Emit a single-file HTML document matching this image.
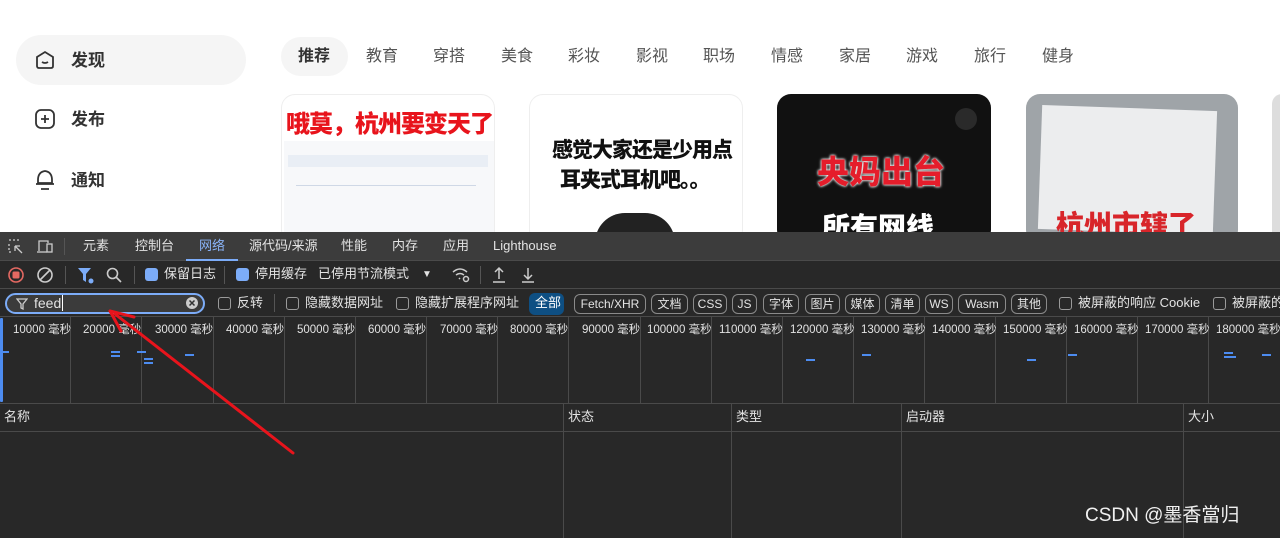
<!DOCTYPE html>
<html><head><meta charset="utf-8"><style>
*{margin:0;padding:0;box-sizing:border-box}
body{width:1280px;height:538px;overflow:hidden;position:relative;background:#fff;font-family:"Liberation Sans","Noto Sans CJK SC",sans-serif;line-height:1.15}
.a{position:absolute;white-space:nowrap}
.nav{font-size:17px;color:#333;font-weight:600}
.tab{font-size:16px;color:#555;top:48px}
.card{position:absolute;top:94px;height:150px;border-radius:14px;overflow:hidden;border:1px solid #eee}
.dt{position:absolute;left:0;top:232px;width:1280px;height:306px;background:#282828;color:#e3e3e3;font-size:13px}
.dt .a{color:#e3e3e3}
.tl{font-size:11.5px;top:92px;color:#ddd}
.vl{position:absolute;top:85px;height:86px;width:1px;background:#4a4a4a}
.chip{position:absolute;top:62px;height:20px;border:1px solid #8a8a8a;border-radius:6px;font-size:12px;line-height:18px;text-align:center;color:#e3e3e3}
.cb{position:absolute;width:13px;height:13px;border-radius:3px}
.cbon{background:#7cacf8}
.cboff{border:1px solid #9a9a9a}
.bl{position:absolute;height:2px;background:#4d8cf0}
</style></head><body>
<!-- left nav -->
<div class="a" style="left:16px;top:35px;width:230px;height:50px;border-radius:25px;background:#f5f5f5"></div>
<svg class="a" style="left:34px;top:49px" width="22" height="22" viewBox="0 0 22 22" fill="none" stroke="#333" stroke-width="1.8"><path d="M3 8 L11 3 L19 8 V17 Q19 19 17 19 H5 Q3 19 3 17Z"/><path d="M8 13 Q11 15 14 13"/></svg>
<div class="a nav" style="left:71px;top:51px">发现</div>
<svg class="a" style="left:34px;top:108px" width="22" height="22" viewBox="0 0 22 22" fill="none" stroke="#333" stroke-width="1.8"><rect x="2" y="2" width="18" height="18" rx="5"/><path d="M11 7 V15 M7 11 H15"/></svg>
<div class="a nav" style="left:71px;top:110px">发布</div>
<svg class="a" style="left:34px;top:168px" width="22" height="24" viewBox="0 0 22 24" fill="none" stroke="#333" stroke-width="1.8"><path d="M11 3 Q4 4 4 12 V15 H18 V12 Q18 4 11 3Z"/><path d="M2 16 H20 M7 21 H15"/></svg>
<div class="a nav" style="left:71px;top:171px">通知</div>
<!-- tabs -->
<div class="a" style="left:281px;top:37px;width:67px;height:39px;border-radius:20px;background:#f5f5f5"></div>
<div class="a tab" style="left:298px;color:#333;font-weight:700">推荐</div>
<div class="a tab" style="left:366px">教育</div><div class="a tab" style="left:433px">穿搭</div><div class="a tab" style="left:501px">美食</div><div class="a tab" style="left:568px">彩妆</div><div class="a tab" style="left:636px">影视</div><div class="a tab" style="left:703px">职场</div><div class="a tab" style="left:771px">情感</div><div class="a tab" style="left:839px">家居</div><div class="a tab" style="left:906px">游戏</div><div class="a tab" style="left:974px">旅行</div><div class="a tab" style="left:1042px">健身</div>
<!-- cards -->
<div class="card" style="left:281px;width:214px;background:#fff">
 <div class="a" style="left:4px;top:16px;font-size:24px;font-weight:900;color:#e8141c;letter-spacing:-1px">哦莫，杭州要变天了</div>
 <div class="a" style="left:2px;top:46px;width:210px;height:100px;background:#f7f8fa"></div>
 <div class="a" style="left:6px;top:60px;width:200px;height:12px;background:#e9eef5"></div>
 <div class="a" style="left:14px;top:90px;width:180px;height:1px;background:#cfd8e6"></div>
</div>
<div class="card" style="left:529px;width:214px;background:#fff">
 <div class="a" style="left:22px;top:44px;font-size:21px;font-weight:800;color:#111;letter-spacing:-1px">感觉大家还是少用点</div>
 <div class="a" style="left:30px;top:74px;font-size:21px;font-weight:800;color:#111;letter-spacing:-1px">耳夹式耳机吧。。</div>
 <div class="a" style="left:65px;top:118px;width:80px;height:60px;border-radius:40px;background:#222"></div>
</div>
<div class="card" style="left:777px;width:214px;background:#111;border:none">
 <div class="a" style="left:40px;top:60px;font-size:32px;font-weight:900;color:#e51d2b;text-shadow:0 0 3px #fff,0 0 2px #fff">央妈出台</div>
 <div class="a" style="left:45px;top:118px;font-size:28px;font-weight:900;color:#fff">所有网线</div>
 <div class="a" style="left:178px;top:14px;width:22px;height:22px;border-radius:11px;background:#2a2a2a"></div>
</div>
<div class="card" style="left:1026px;width:212px;background:#9fa4a8;border:none">
 <div class="a" style="left:14px;top:14px;width:175px;height:124px;background:#ecedee;transform:rotate(2deg)"></div>
 <div class="a" style="left:30px;top:116px;font-size:28px;font-weight:900;color:#d8252a">杭州市辖了</div>
</div>
<div class="card" style="left:1272px;width:20px;background:#ddd;border:none"></div>
<!-- devtools -->
<div class="dt">
 <div class="a" style="left:0;top:0;width:1280px;height:29px;background:#3c3c3c;border-bottom:1px solid #4a4a4a"></div>
 <svg class="a" style="left:8px;top:7px" width="16" height="16" viewBox="0 0 16 16" fill="none" stroke="#ccc" stroke-width="1.3"><path d="M1 1h2M5 1h2M9 1h2M1 5v2M1 9v2M1 13h2" /><path d="M7 7l7 7M7 7v5M7 7h5"/></svg>
 <svg class="a" style="left:36px;top:7px" width="18" height="16" viewBox="0 0 18 16" fill="none" stroke="#ccc" stroke-width="1.3"><path d="M3 12V2h9v2"/><path d="M1 13h10"/><rect x="11" y="5" width="5" height="8"/></svg>
 <div class="a" style="left:64px;top:6px;width:1px;height:17px;background:#555"></div>
 <div class="a" style="left:83px;top:7px">元素</div><div class="a" style="left:135px;top:7px">控制台</div>
 <div class="a" style="left:199px;top:7px;color:#8ab4f8!important">网络</div>
 <div class="a" style="left:186px;top:27px;width:52px;height:2px;background:#7cacf8"></div>
 <div class="a" style="left:249px;top:7px">源代码/来源</div><div class="a" style="left:341px;top:7px">性能</div><div class="a" style="left:392px;top:7px">内存</div><div class="a" style="left:443px;top:7px">应用</div><div class="a" style="left:493px;top:7px">Lighthouse</div>
 <!-- toolbar -->
 <div class="a" style="left:0;top:56px;width:1280px;height:1px;background:#4a4a4a"></div>
 <svg class="a" style="left:7px;top:34px" width="18" height="18"><circle cx="9" cy="9" r="7" fill="none" stroke="#e46962" stroke-width="1.6"/><rect x="5.5" y="5.5" width="7" height="7" rx="1.5" fill="#e46962"/></svg>
 <svg class="a" style="left:36px;top:34px" width="18" height="18" fill="none" stroke="#ccc" stroke-width="1.6"><circle cx="9" cy="9" r="7"/><path d="M4 14L14 4"/></svg>
 <div class="a" style="left:65px;top:34px;width:1px;height:18px;background:#555"></div>
 <svg class="a" style="left:77px;top:35px" width="18" height="17"><path d="M1 1h13l-5 6v8l-3-2V7z" fill="#7cacf8"/><circle cx="14" cy="14" r="2.5" fill="#7cacf8"/></svg>
 <svg class="a" style="left:106px;top:35px" width="16" height="16" fill="none" stroke="#ccc" stroke-width="1.6"><circle cx="6.5" cy="6.5" r="5"/><path d="M10 10l5 5"/></svg>
 <div class="a" style="left:134px;top:34px;width:1px;height:18px;background:#555"></div>
 <div class="cb cbon" style="left:145px;top:36px"></div><div class="a" style="left:164px;top:35px">保留日志</div>
 <div class="a" style="left:224px;top:34px;width:1px;height:18px;background:#555"></div>
 <div class="cb cbon" style="left:236px;top:36px"></div><div class="a" style="left:255px;top:35px">停用缓存</div>
 <div class="a" style="left:318px;top:35px">已停用节流模式</div>
 <div class="a" style="left:422px;top:37px;font-size:10px">▼</div>
 <svg class="a" style="left:451px;top:35px" width="20" height="16" fill="none" stroke="#ccc" stroke-width="1.5"><path d="M2 5Q9 -1 16 5M5 8Q9 5 13 8M8 11l1 1"/><circle cx="15" cy="12" r="2.5"/></svg>
 <div class="a" style="left:480px;top:34px;width:1px;height:18px;background:#555"></div>
 <svg class="a" style="left:492px;top:34px" width="14" height="18" fill="none" stroke="#ccc" stroke-width="1.5"><path d="M7 13V2M3 6l4-4 4 4M1 16h12"/></svg>
 <svg class="a" style="left:521px;top:34px" width="14" height="18" fill="none" stroke="#ccc" stroke-width="1.5"><path d="M7 2v11M3 9l4 4 4-4M1 16h12"/></svg>
 <!-- filter row -->
 <div class="a" style="left:0;top:84px;width:1280px;height:1px;background:#4a4a4a"></div>
 <div class="a" style="left:5px;top:61px;width:200px;height:21px;border:2px solid #7cacf8;border-radius:11px;background:#3b3b3b"></div>
 <svg class="a" style="left:16px;top:66px" width="12" height="12" fill="none" stroke="#ccc" stroke-width="1.3"><path d="M1 1h10L7 6v5L5 10V6z"/></svg>
 <div class="a" style="left:34px;top:63px;font-size:14px">feed<span style="border-left:1px solid #fff;margin-left:1px"></span></div>
 <svg class="a" style="left:185px;top:64px" width="14" height="14"><circle cx="7" cy="7" r="6" fill="#ccc"/><path d="M4.5 4.5l5 5M9.5 4.5l-5 5" stroke="#333" stroke-width="1.5"/></svg>
 <div class="cb cboff" style="left:218px;top:65px"></div><div class="a" style="left:237px;top:64px">反转</div>
 <div class="a" style="left:274px;top:62px;width:1px;height:18px;background:#555"></div>
 <div class="cb cboff" style="left:286px;top:65px"></div><div class="a" style="left:305px;top:64px">隐藏数据网址</div>
 <div class="cb cboff" style="left:396px;top:65px"></div><div class="a" style="left:415px;top:64px">隐藏扩展程序网址</div>
 <div class="a" style="left:529px;top:61px;width:35px;height:22px;border-radius:6px;background:#0e4f83"></div><div class="a" style="left:535px;top:64px;color:#fff!important">全部</div>
 <div class="chip" style="left:574px;width:72px">Fetch/XHR</div><div class="chip" style="left:651px;width:37px">文档</div><div class="chip" style="left:693px;width:34px">CSS</div><div class="chip" style="left:732px;width:25px">JS</div><div class="chip" style="left:763px;width:36px">字体</div><div class="chip" style="left:805px;width:35px">图片</div><div class="chip" style="left:845px;width:35px">媒体</div><div class="chip" style="left:885px;width:35px">清单</div><div class="chip" style="left:925px;width:28px">WS</div><div class="chip" style="left:958px;width:48px">Wasm</div><div class="chip" style="left:1011px;width:36px">其他</div>
 <div class="cb cboff" style="left:1059px;top:65px"></div><div class="a" style="left:1078px;top:64px">被屏蔽的响应 Cookie</div>
 <div class="cb cboff" style="left:1213px;top:65px"></div><div class="a" style="left:1232px;top:64px">被屏蔽的</div>
 <!-- timeline -->
 <div class="a" style="left:0;top:86px;width:3px;height:84px;background:#4d8cf0;border-radius:1px"></div>
 <div class="vl" style="left:70px"></div><div class="vl" style="left:141px"></div><div class="vl" style="left:213px"></div><div class="vl" style="left:284px"></div><div class="vl" style="left:355px"></div><div class="vl" style="left:426px"></div><div class="vl" style="left:497px"></div><div class="vl" style="left:568px"></div><div class="vl" style="left:640px"></div><div class="vl" style="left:711px"></div><div class="vl" style="left:782px"></div><div class="vl" style="left:853px"></div><div class="vl" style="left:924px"></div><div class="vl" style="left:995px"></div><div class="vl" style="left:1066px"></div><div class="vl" style="left:1137px"></div><div class="vl" style="left:1208px"></div>
 <div class="a tl" style="left:13px">10000 毫秒</div><div class="a tl" style="left:83px">20000 毫秒</div><div class="a tl" style="left:155px">30000 毫秒</div><div class="a tl" style="left:226px">40000 毫秒</div><div class="a tl" style="left:297px">50000 毫秒</div><div class="a tl" style="left:368px">60000 毫秒</div><div class="a tl" style="left:440px">70000 毫秒</div><div class="a tl" style="left:510px">80000 毫秒</div><div class="a tl" style="left:582px">90000 毫秒</div><div class="a tl" style="left:647px">100000 毫秒</div><div class="a tl" style="left:719px">110000 毫秒</div><div class="a tl" style="left:790px">120000 毫秒</div><div class="a tl" style="left:861px">130000 毫秒</div><div class="a tl" style="left:932px">140000 毫秒</div><div class="a tl" style="left:1003px">150000 毫秒</div><div class="a tl" style="left:1074px">160000 毫秒</div><div class="a tl" style="left:1145px">170000 毫秒</div><div class="a tl" style="left:1216px">180000 毫秒</div>
 <div class="bl" style="left:0;top:119px;width:9px"></div><div class="bl" style="left:111px;top:119px;width:9px"></div><div class="bl" style="left:111px;top:123px;width:9px"></div><div class="bl" style="left:137px;top:119px;width:9px"></div><div class="bl" style="left:144px;top:126px;width:9px"></div><div class="bl" style="left:144px;top:130px;width:9px"></div><div class="bl" style="left:185px;top:122px;width:9px"></div><div class="bl" style="left:806px;top:127px;width:9px"></div><div class="bl" style="left:862px;top:122px;width:9px"></div><div class="bl" style="left:1027px;top:127px;width:9px"></div><div class="bl" style="left:1068px;top:122px;width:9px"></div><div class="bl" style="left:1224px;top:120px;width:9px"></div><div class="bl" style="left:1224px;top:124px;width:12px"></div><div class="bl" style="left:1262px;top:122px;width:9px"></div>
 <!-- table -->
 <div class="a" style="left:0;top:171px;width:1280px;height:1px;background:#4a4a4a"></div>
 <div class="a" style="left:0;top:199px;width:1280px;height:1px;background:#4a4a4a"></div>
 <div class="a" style="left:563px;top:172px;width:1px;height:134px;background:#4a4a4a"></div><div class="a" style="left:731px;top:172px;width:1px;height:134px;background:#4a4a4a"></div><div class="a" style="left:901px;top:172px;width:1px;height:134px;background:#4a4a4a"></div><div class="a" style="left:1183px;top:172px;width:1px;height:134px;background:#4a4a4a"></div>
 <div class="a" style="left:4px;top:178px">名称</div><div class="a" style="left:568px;top:178px">状态</div><div class="a" style="left:736px;top:178px">类型</div><div class="a" style="left:906px;top:178px">启动器</div><div class="a" style="left:1188px;top:178px">大小</div>
 <div class="a" style="left:1085px;top:273px;font-size:19px;color:#f0f0f0!important">CSDN @墨香當归</div>
</div>
<svg class="a" style="left:0;top:0" width="1280" height="538"><path d="M293 453 L115 314" stroke="#e8141c" stroke-width="3" stroke-linecap="round"/><path d="M110 311 L134 317 M110 311 L121 331" stroke="#e8141c" stroke-width="3" stroke-linecap="round"/></svg>
</body></html>
